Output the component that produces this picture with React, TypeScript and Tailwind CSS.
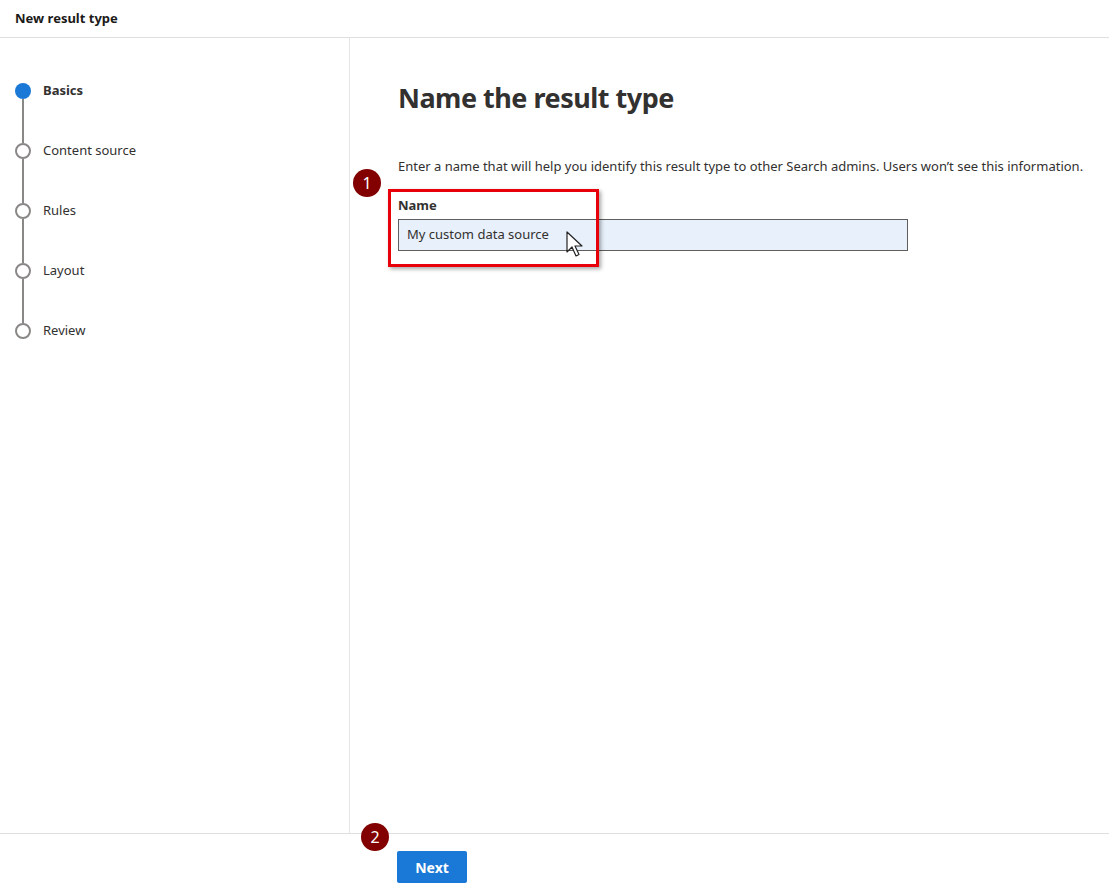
import React from "react";

const steps = ["Basics", "Content source", "Rules", "Layout", "Review"];

function Badge({ n }: { n: string }) {
  return (
    <div className="flex h-[28px] w-[28px] items-center justify-center rounded-full bg-[#820000] text-[16px] text-white">
      {n}
    </div>
  );
}

export default function App() {
  return (
    <div
      className="flex h-[892px] w-[1109px] flex-col bg-white text-[#323130]"
      style={{ fontFamily: '"Segoe UI", "Noto Sans", "Open Sans", sans-serif' }}
    >
      {/* Header */}
      <div className="flex h-[38px] shrink-0 items-center border-b border-[#e1dfdd] px-[15px]">
        <span className="text-[13px] font-bold text-[#1b1a19]">New result type</span>
      </div>

      <div className="flex min-h-0 flex-1">
        {/* Steps */}
        <div className="w-[350px] shrink-0 border-r border-[#e8e6e4] pl-[15px] pt-[45px]">
          {steps.map((s, i) => (
            <div key={s}>
              <div className="flex h-[16px] items-center gap-[12px]">
                {i === 0 ? (
                  <div className="h-[16px] w-[16px] rounded-full bg-[#1a78d6]" />
                ) : (
                  <div className="h-[16px] w-[16px] rounded-full border-2 border-[#8a8886] bg-white" />
                )}
                <span className={i === 0 ? "text-[13px] font-bold" : "text-[13px]"}>{s}</span>
              </div>
              {i < steps.length - 1 && <div className="ml-[7px] h-[44px] w-[2px] bg-[#8a8886]" />}
            </div>
          ))}
        </div>

        {/* Main */}
        <div className="relative flex-1 pl-[48px] pt-[42px]">
          <h1 className="text-[27px] font-bold leading-[36px] tracking-[-0.5px] text-[#323130]">Name the result type</h1>
          <p className="mt-[41px] text-[13px] leading-[18px]">
            Enter a name that will help you identify this result type to other Search admins. Users won’t see this information.
          </p>
          <div className="relative mt-[21px] w-[510px]">
            <div className="text-[13px] font-bold leading-[18px]">Name</div>
            <div className="mt-[5px] flex h-[32px] items-center border border-[#605e5c] bg-[#e8f0fb] px-[8px] text-[13px]">
              My custom data source
            </div>

            {/* annotation box */}
            <div className="pointer-events-none absolute left-[-10px] top-[-7px] h-[78px] w-[211px] border-[3px] border-[#e8000b] shadow-[2px_2px_4px_rgba(0,0,0,0.35)]" />
            <div className="absolute left-[-45px] top-[-27px]">
              <Badge n="1" />
            </div>

            {/* cursor */}
            <svg className="absolute left-[168px] top-[35px]" width="20" height="28" viewBox="0 0 20 28">
              <path d="M1 1 L1 21 L6 16 L10 25 L13 23.5 L9 15 L16 15 Z" fill="white" stroke="#222" strokeWidth="1.2" strokeLinejoin="round" />
            </svg>
          </div>
        </div>
      </div>

      {/* Footer */}
      <div className="relative flex h-[59px] shrink-0 items-start border-t border-[#e1dfdd] pl-[397px] pt-[17px]">
        <div className="absolute left-[361px] top-[-11px]">
          <Badge n="2" />
        </div>
        <button className="h-[32px] w-[70px] rounded-[2px] bg-[#1a78d6] text-[14px] font-bold text-white">Next</button>
      </div>
    </div>
  );
}
